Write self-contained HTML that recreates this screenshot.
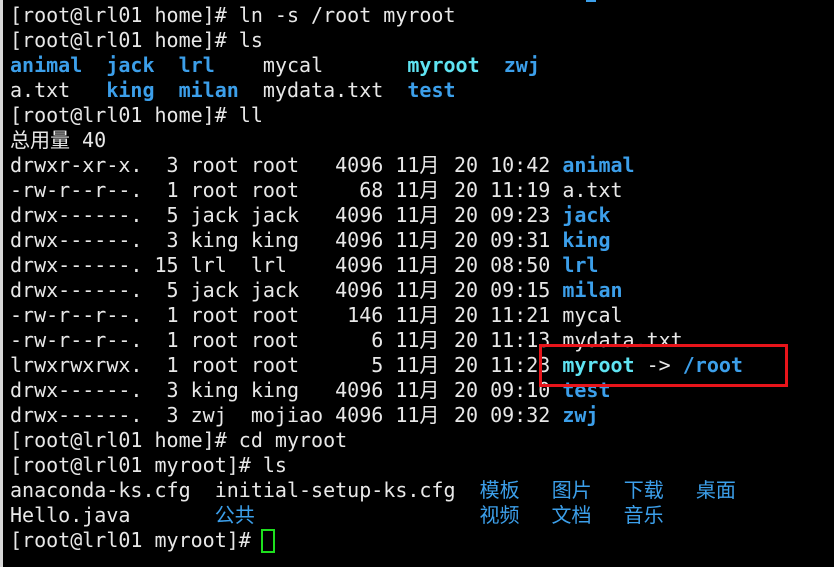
<!DOCTYPE html>
<html><head><meta charset="utf-8"><style>
html,body{margin:0;padding:0;background:#000;width:834px;height:567px;overflow:hidden;}
body{position:relative;}
.strip{position:absolute;left:0;top:0;width:3px;height:567px;background:#d8d8d8;}
.t{position:absolute;left:10px;top:3px;font-family:"DejaVu Sans Mono","Liberation Mono",monospace;font-size:20px;color:#e8e8e8;}
.t div{height:25px;line-height:25px;white-space:pre;}
.d{color:#3c9fea;font-weight:bold;}
.l{color:#5fe3f2;font-weight:bold;}
.m{display:inline-block;width:22.5px;font-family:"Noto Sans CJK SC",sans-serif;line-height:20px;vertical-align:top;margin-top:1px;}
.c{display:inline-block;width:48px;font-family:"Noto Sans CJK SC","WenQuanYi Zen Hei",sans-serif;color:#3c9fea;font-size:20px;line-height:20px;vertical-align:top;margin-top:1px;}
.z{display:inline-block;width:60px;font-family:"Noto Sans CJK SC",sans-serif;line-height:20px;vertical-align:top;margin-top:1px;}
.box{position:absolute;left:539px;top:344px;width:243px;height:37px;border:3px solid #e8141a;}
.cur{position:absolute;left:261px;top:529px;width:10px;height:20px;border:2px solid #1ee01e;}
.topb{position:absolute;left:586px;top:0;width:10px;height:2px;background:#3c9fea;}
</style></head><body>
<div class="strip"></div>
<div class="topb"></div>
<div class="t"><div>[root@lrl01 home]# ln -s /root myroot</div><div>[root@lrl01 home]# ls</div><div><span class="d">animal</span>  <span class="d">jack</span>  <span class="d">lrl</span>    mycal       <span class="l">myroot</span>  <span class="d">zwj</span></div><div>a.txt   <span class="d">king</span>  <span class="d">milan</span>  mydata.txt  <span class="d">test</span></div><div>[root@lrl01 home]# ll</div><div><span class="z">总用量</span> 40</div><div>drwxr-xr-x.  3 root root   4096 11<span class="m">月</span> 20 10:42 <span class="d">animal</span></div><div>-rw-r--r--.  1 root root     68 11<span class="m">月</span> 20 11:19 a.txt</div><div>drwx------.  5 jack jack   4096 11<span class="m">月</span> 20 09:23 <span class="d">jack</span></div><div>drwx------.  3 king king   4096 11<span class="m">月</span> 20 09:31 <span class="d">king</span></div><div>drwx------. 15 lrl  lrl    4096 11<span class="m">月</span> 20 08:50 <span class="d">lrl</span></div><div>drwx------.  5 jack jack   4096 11<span class="m">月</span> 20 09:15 <span class="d">milan</span></div><div>-rw-r--r--.  1 root root    146 11<span class="m">月</span> 20 11:21 mycal</div><div>-rw-r--r--.  1 root root      6 11<span class="m">月</span> 20 11:13 mydata.txt</div><div>lrwxrwxrwx.  1 root root      5 11<span class="m">月</span> 20 11:23 <span class="l">myroot</span> -&gt; <span class="d">/root</span></div><div>drwx------.  3 king king   4096 11<span class="m">月</span> 20 09:10 <span class="d">test</span></div><div>drwx------.  3 zwj  mojiao 4096 11<span class="m">月</span> 20 09:32 <span class="d">zwj</span></div><div>[root@lrl01 home]# cd myroot</div><div>[root@lrl01 myroot]# ls</div><div>anaconda-ks.cfg  initial-setup-ks.cfg  <span class="c">模板</span>  <span class="c">图片</span>  <span class="c">下载</span>  <span class="c">桌面</span></div><div>Hello.java       <span class="c">公共</span>                  <span class="c">视频</span>  <span class="c">文档</span>  <span class="c">音乐</span></div><div>[root@lrl01 myroot]# </div></div>
<div class="box"></div>
<div class="cur"></div>
</body></html>
